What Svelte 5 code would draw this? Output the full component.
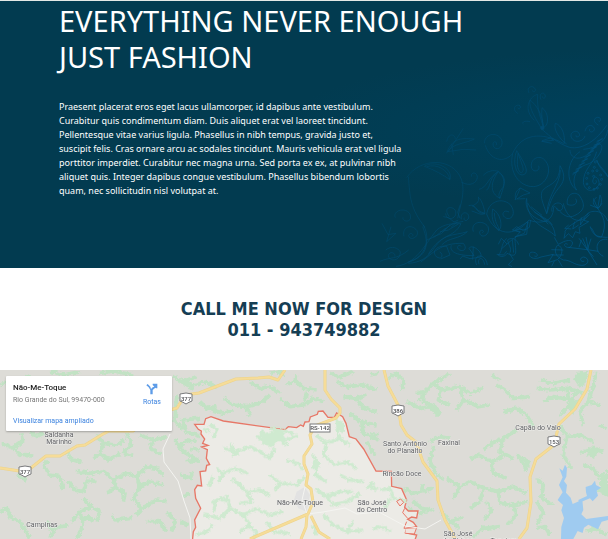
<script>
  const leftGreens = [
    'M0 62L22 48L45 60L90 30M150 18L190 30L240 20M300 25L340 18L400 30M520 30L540 48L580 70M545 50L590 35M530 90L525 170L560 200L600 215M560 200L545 165L600 160M525 225L550 260L600 290M570 250L600 255',
    'M5 235L40 250L70 225L65 205M40 250L60 268L100 270M0 440L20 430L35 460L60 470L90 520M130 300L150 330L180 335L190 375M130 300L145 285M205 350L225 375L250 380L262 345L290 350',
    'M150 518L165 490L205 480M160 500L140 470M290 210L310 235L350 240L375 225M310 235L300 265L325 285L360 265M380 205L395 240L370 262L400 275M420 210L460 225L500 215M460 225L450 250L485 270',
    'M230 320L275 325L310 318L340 345L350 370L320 380M340 345L380 325L410 335L440 305L470 310M350 370L375 385L370 410M410 335L420 365L450 350L490 360M420 365L400 400L425 430L470 405L500 410M425 430L410 450',
    'M250 400L275 425L240 440L215 470M275 425L300 440L290 470M240 440L250 480L230 520M335 450L345 465L395 460M500 440L525 470L515 500M440 470L480 470L500 500M200 260L215 285L245 290',
    'M280 470L265 455L240 465M50 330L80 345M300 265L280 280M470 310L490 330M90 200L110 215L130 205'
  ];
  const middleOuter = [
    'M0 45L40 60L80 50L110 70M60 110L80 130L110 125M80 130L130 145L160 135M130 100L160 120L200 125L240 115L270 90M200 125L210 155M210 50L240 70L270 65L300 85M270 25L300 18L310 35M320 60L345 45L370 70L410 75M345 45L350 30',
    'M300 100L330 125L370 120L400 100L430 110M380 80L375 105M450 25L480 35L520 20M470 50L500 65L550 60L590 75M490 95L530 100L550 130L590 140M530 100L560 90M510 145L540 170L590 180M545 170L550 205L595 225M560 230L585 270',
    'M0 240L25 225L50 230M20 290L50 285M0 330L30 340L40 320M10 395L30 385M0 470L25 480'
  ];
  const middleInner = [
    'M90 175L110 195L100 220M70 190L90 200M130 250L170 260L210 245L240 260L270 280L285 250M150 235L160 255M230 215L255 225L290 215L320 225L350 210M270 190L300 195L340 205M250 195L240 220M290 215L320 240',
    'M110 310L130 325L165 310L205 325M130 325L115 350M155 340L175 355L200 380L240 375L270 390M200 380L215 410L180 415M100 335L85 365M270 330L300 355L350 360L375 335M300 355L285 375M320 285L350 295L370 310',
    'M95 415L120 400L150 410M110 405L100 440M70 450L120 460L150 430L190 450L230 430M150 430L140 390M230 430L270 450L310 440M190 450L210 480L180 500M50 510L80 500L100 480M260 470L280 500L330 505',
    'M410 210L440 235L480 220L470 190M440 235L430 270L465 300M400 270L415 300L405 330L440 350M465 300L500 290L530 310M480 220L510 240M405 370L440 395L460 420L500 410L540 385M440 395L480 380L520 380',
    'M480 330L510 345L550 350M430 450L460 480L500 500L550 495M400 480L410 510M500 500L520 470M580 350L560 370M200 480L230 500L220 520'
  ];
  const rightGreens = [
    'M0 30L25 25M55 40L80 25L100 45L95 75M140 85L165 80L190 55L240 25M165 80L160 110L195 125L210 150M190 55L215 75L270 65L300 85L340 70M215 75L205 105L240 120M270 65L280 105L325 125L360 120M280 105L260 135',
    'M380 60L405 75L430 100L480 95M365 30L390 45M400 140L440 130L470 150L490 185M510 45L550 55L600 45M500 70L540 75L590 70L640 85M520 110L550 95L600 105L630 75M590 70L600 120L570 150',
    'M680 20L670 60L655 110L690 120M655 110L630 140L640 180M570 180L590 215L580 270L605 310M590 215L630 210L670 230M630 265L670 250L700 260M690 180L710 190M440 195L400 220L390 260L430 280M400 220L365 235L340 255',
    'M0 205L25 210M110 110L150 130L180 125L205 150M145 105L160 90M180 230L210 215L240 220M190 245L180 290L200 330L220 340M300 285L325 270L365 290L400 275M365 290L370 325L410 340M440 270L475 290L465 320M230 340L270 365L300 350M270 365L250 400',
    'M300 350L340 370L330 410L300 430M340 370L385 380L430 365L470 385M385 380L390 415L430 420L475 410M350 410L365 435L345 465M430 420L440 450L410 480M100 370L130 385L190 370M125 405L155 430L190 435M115 430L140 445L170 440',
    'M160 355L155 380M215 440L240 470L280 455M240 470L270 490M310 515L340 490L390 485M500 340L520 360L515 400L550 420M500 410L520 440L500 480M640 300L670 310L690 340M650 500L675 490L710 510M500 490L525 485L540 510'
  ];
  const innerCorner = 'M30 375L60 370L70 400L110 410M0 360L20 375M10 490L40 485L60 500M60 400L45 430';
  const ornament = [
    'M680 196C650 240 610 270 568 262C530 248 515 233 486 208C470 180 445 145 450 120C470 135 488 165 490 200',
    'M560 252C535 235 520 205 526 190C545 195 557 225 552 252M610 268C655 265 680 237 683 210M570 270C570 300 610 310 650 255C683 240 660 305 615 315C580 330 575 370 590 390C555 365 560 300 600 275',
    'M615 228C610 245 588 248 579 239C560 220 590 205 597 220C604 230 585 235 588 226M615 214C619 195 636 190 643 205C645 218 625 220 629 207M655 195C640 187 639 174 653 172C668 172 660 190 655 182',
    'M450 185C430 180 425 190 430 192M490 203C510 195 505 155 486 143C483 166 488 185 490 203M463 181C430 150 445 110 473 103C470 150 483 176 490 200M413 160C395 150 405 130 420 137C425 145 415 150 414 143M447 99C437 80 460 73 466 88C467 99 455 95 458 91M483 119C474 100 493 92 496 108C496 119 485 114 488 109',
    'M550 250C485 215 425 220 398 280C385 340 420 380 460 380C500 377 517 330 498 305C482 280 450 295 454 321C460 343 484 330 475 317',
    'M410 272C396 310 409 344 426 345C449 342 440 318 410 272M414 280C430 324 434 330 424 339C408 330 412 300 414 280M314 250C310 225 350 210 365 240C373 267 340 276 339 252C340 240 355 246 348 256M316 256C330 300 370 312 398 281',
    'M297 388C320 385 325 350 356 334C373 350 374 370 369 382C362 390 351 405 360 415C330 400 330 370 354 336M352 337C326 355 331 388 319 390M356 338C387 354 369 382 360 415M356 334C340 330 324 331 310 346',
    'M80 353C120 292 220 290 245 360C257 400 239 440 233 475M85 350C90 410 90 445 135 502M133 319C160 300 220 320 210 359C190 345 164 330 133 319M140 320C170 310 205 330 209 357M245 367C270 380 290 370 292 352C291 333 270 337 275 350',
    'M48 619C110 610 130 560 170 510C194 490 218 491 243 491C220 537 184 517 145 583M85 610C160 605 155 550 200 530C223 521 243 522 262 515C235 540 208 530 185 555M122 606C160 580 180 548 250 550C263 565 252 576 239 570C226 563 235 552 244 559',
    'M130 495C160 550 120 601 85 606C140 588 150 558 128 500M72 529C65 500 95 490 111 512C120 532 87 545 86 526C91 514 106 525 95 530M17 570C35 555 55 564 61 576C61 605 26 606 25 586C30 571 49 580 44 589M0 604C30 590 50 600 86 570',
    'M266 437C290 430 278 450 315 460C310 430 300 415 295 411C300 428 284 433 277 438C292 441 287 460 315 461M275 453C300 461 302 466 315 461M320 463C325 425 365 410 391 434C410 460 395 480 380 475C360 467 370 446 387 456M338 447C332 481 344 495 356 512C370 500 362 460 338 447M343 458C345 490 354 496 357 507',
    'M320 462C345 530 405 532 447 480C470 490 521 495 521 440C530 435 550 483 583 467C611 454 620 436 597 405C577 390 558 410 562 433C576 440 597 433 587 416M516 455C510 430 540 420 548 438C551 455 528 455 530 444',
    'M440 415C430 450 464 484 504 485C520 496 523 511 526 528C500 500 441 496 440 415M443 429C460 467 500 468 517 495M463 456L500 482M482 468L505 493M453 440L486 466M407 419C402 400 411 390 421 384L450 399L430 405L410 417L436 416M421 384L405 420',
    'M540 317C560 350 550 368 535 385C515 410 510 430 500 461C489 430 480 410 486 395C500 370 538 380 540 317M541 330C540 375 505 400 500 461M650 275C640 315 610 325 610 368C615 394 637 400 656 376C662 358 643 338 638 363C640 379 653 369 648 361M650 300C657 320 680 335 683 350C670 330 658 325 650 300',
    'M550 430C560 480 605 500 625 459C640 450 670 450 683 483M554 515C570 490 590 490 626 459M556 515L552 535L565 521L578 533L586 515L600 520L597 502L626 485L611 481L629 463M566 495L554 505L574 507M584 485L578 507L596 495M604 472L601 495L615 472',
    'M650 412C635 420 637 435 653 445C665 437 668 420 660 405L653 445L640 415M630 435L655 445L666 430M653 445C670 470 682 490 665 531C640 535 644 510 630 500C638 517 639 532 683 532',
    'M280 515C270 485 310 478 324 500C333 525 302 539 299 518C300 505 317 512 307 518M208 470C185 440 220 435 227 454C232 478 198 485 197 460M244 478C240 450 270 455 266 474C259 488 249 480 253 473',
    'M380 535C360 555 370 570 355 586C370 595 381 583 381 580C393 585 402 590 407 580C408 555 403 541 406 530L440 523L444 485L406 508L440 508M383 539C400 530 411 540 416 554M383 540C386 560 396 562 390 578M397 540L401 578M365 566L401 535M398 509L421 515L405 534',
    'M452 480L448 502L430 512L410 500L397 510L421 517M444 485L433 520L404 531M355 553L364 535L381 552M388 580L400 598L385 614L396 620M350 583L371 585L380 574',
    'M533 555C520 570 525 590 550 600C570 599 583 615 604 616C627 617 630 594 611 591C594 594 604 609 613 603M533 555C550 560 550 585 532 599L504 608L520 583L483 591C460 602 440 589 452 577C474 573 478 594 463 588M523 532L535 553L551 545C577 535 585 548 570 562C549 565 550 545 563 553M514 569L550 570M515 585L551 585M523 603L515 619M535 600L547 620',
    'M565 562L622 569L651 615M622 569L597 535M622 569L608 535M622 569L633 536M597 562L604 540M640 590L622 569L655 574M618 531L625 568M670 589C638 573 650 533 682 538M182 597L210 585L200 559C170 555 154 575 169 590C189 603 190 580 179 576M214 556C207 577 233 587 282 587L267 565C276 550 310 577 302 591L270 596L248 588L240 597M280 560L278 599',
    'M290 615C275 581 317 577 322 615M297 613C290 591 310 588 314 614M240 475L233 457L241 433M235 480L222 486L206 473L190 470M232 485L213 502M250 484L220 490L190 510M197 505L165 530L140 540M210 495L184 521L160 530M235 492L205 510L180 515',
    'M200 280C216 230 250 235 283 237C260 250 218 250 203 275L250 268L288 270M200 245C208 210 230 230 225 237M250 205L205 275M215 251L220 285M46 473C36 450 80 440 90 463C100 490 65 487 69 472M6 490L24 524L48 520L20 545L33 500'
  ];
  const leafVeins = Array.from({ length: 9 }, (_, i) => ({ x: 577 + i * 9, y: 345 - i * 12 }));
  const dots = [[624,340],[620,355],[621,372],[628,383],[642,388],[652,384],[661,373],[665,358],[662,345],[651,332],[643,322],[646,306],[638,333],[641,349]];
  const roads = [
    'M0 98L26 102L46 86H60L77 76L85 75L103 64L109 61L133 61L156 44L177 38L185 25L199 23L236 9L258 8L269 7L278 10L285 0',
    'M325 0V20L331 29L340 38V43L336 48L315 56L310 65L312 74L304 86V94L308 104L306 115L311 119L313 132L308 144L250 169M307 145L306 157L301 169M311 146L319 162L330 169',
    'M384 0L388 16L398 35L401 55L407 65L416 72L423 92L437 111L438 130L445 150L451 161L455 169',
    'M591 0L587 19L575 39L559 54L554 75L536 89L530 107L531 132L527 158L519 169'
  ];
</script>

<main>
  <section class="hero">
    <svg class="ornament" viewBox="0 0 684 624" aria-hidden="true">
      <defs>
        <linearGradient id="fade" x1="0" y1="0" x2="1" y2="1">
          <stop offset="0" stop-color="#fff" stop-opacity=".1" />
          <stop offset=".5" stop-color="#fff" stop-opacity=".4" />
          <stop offset="1" stop-color="#fff" stop-opacity=".9" />
        </linearGradient>
        <mask id="ornament-mask"><rect width="684" height="624" fill="url(#fade)" /></mask>
      </defs>
      <g mask="url(#ornament-mask)" fill="none" stroke="#006098" stroke-width="2">
        {#each ornament as d}<path {d} />{/each}
        {#each leafVeins as v}<path d="M{v.x} {v.y}l18 -14M{v.x + 1} {v.y - 5}l19 -8" />{/each}
        {#each dots as [x, y]}<circle cx={x} cy={y} r="3" />{/each}
        <circle cx="487" cy="204" r="5" fill="#075a91" />
        <path d="M486 242l25-8 10 7-36 3 30 6" />
      </g>
    </svg>
    <div class="copy">
      <h1>EVERYTHING NEVER ENOUGH<br />JUST FASHION</h1>
      <p>
        Praesent placerat eros eget lacus ullamcorper, id dapibus ante vestibulum.<br />
        Curabitur quis condimentum diam. Duis aliquet erat vel laoreet tincidunt.<br />
        Pellentesque vitae varius ligula. Phasellus in nibh tempus, gravida justo et,<br />
        suscipit felis. Cras ornare arcu ac sodales tincidunt. Mauris vehicula erat vel ligula<br />
        porttitor imperdiet. Curabitur nec magna urna. Sed porta ex ex, at pulvinar nibh<br />
        aliquet quis. Integer dapibus congue vestibulum. Phasellus bibendum lobortis<br />
        quam, nec sollicitudin nisl volutpat at.
      </p>
    </div>
  </section>

  <section class="call">
    <h2>CALL ME NOW FOR DESIGN<br />011 - 943749882</h2>
  </section>

  <section class="map" aria-label="Mapa de Não-Me-Toque">
    <svg class="canvas" viewBox="0 0 608 169" preserveAspectRatio="xMidYMin slice">
      <defs>
        <filter id="rough" filterUnits="userSpaceOnUse" x="0" y="0" width="720" height="540">
          <feTurbulence type="fractalNoise" baseFrequency=".1" numOctaves="3" seed="4" />
          <feDisplacementMap in="SourceGraphic" scale="15" xChannelSelector="R" yChannelSelector="G" />
        </filter>
      </defs>
      <rect width="608" height="169" fill="#dddcd7" />
      <g fill="none" stroke="#c2e2c4" stroke-width="11" stroke-linejoin="round">
        <g transform="translate(0 -5) scale(.3333)" filter="url(#rough)">{#each leftGreens as d}<path {d} />{/each}</g>
        <g transform="translate(180 -5) scale(.3333)" filter="url(#rough)">{#each middleOuter as d}<path {d} />{/each}</g>
        <g transform="translate(370 -5) scale(.3333)" filter="url(#rough)">
          {#each rightGreens as d}<path {d} />{/each}
          <path fill="#c2e2c4" stroke="none" d="M620 20L655 18L648 55L630 70L612 43ZM595 100L625 110L610 150L594 128ZM690 330L714 315V395L680 380L690 365ZM665 245L688 260L672 282L650 270ZM440 275L482 302L465 315Z" />
        </g>
      </g>
      <g transform="translate(180 -5) scale(.3333)">
        <path fill="#ecebe6" d="M36 540L40 500L47 487L44 465L62 430L47 400L44 374L52 361L65 363L60 320L77 318L80 301L89 299L79 280L82 254L65 246L84 241L68 235L74 222L63 207L64 198L55 193L44 178H72L77 161L93 155L130 168L315 194L325 185L350 188L362 180L370 184L375 171L387 170L391 156L412 148L415 139L429 138L444 157L463 157L470 144L488 155L498 175L508 215L528 222L551 252L588 318L634 319L635 364L665 371L680 405L674 427L685 438H714L710 459L695 456L683 463L700 472L710 485L680 490L676 503L710 510L700 540Z" stroke="#e77767" stroke-width="4" />
        <g fill="none" stroke="#cfead0" stroke-width="10" stroke-linejoin="round" filter="url(#rough)">
          {#each middleInner as d}<path {d} />{/each}
          <path transform="translate(570 0)" d={innerCorner} />
          <path fill="#cfead0" stroke="none" d="M250 205L302 192L319 216L293 229L275 249L246 237ZM466 160L492 172V201L470 195ZM155 260L171 252L178 270L159 275ZM400 285L416 295L411 318L396 309Z" />
        </g>
        <path fill="#e2e2e2" d="M350 380L374 366L390 390L380 440L355 430L342 405Z" />
        <path fill="#f0e4df" stroke="#e77767" stroke-width="3" d="M650 409L662 402L671 412L660 423ZM674 430L668 443L683 460M680 470L672 490L710 488L703 507L676 505" />
      </g>

      <g fill="none" stroke="#f4f4f1" stroke-width="1">
        <path d="M170 64L163 79L164 92L178 111L184 131L190 148L191 169" />
        <path d="M305 117L302 130L307 144L323 142L345 138L357 144L379 142L405 156L425 159L441 150" />
      </g>
      <g fill="none" stroke-linejoin="round">
        {#each roads as d}
          <path {d} stroke="#ecd38a" stroke-width="3" />
          <path {d} stroke="#f6dc98" stroke-width="2" />
        {/each}
      </g>
      <g transform="translate(370 -5) scale(.3333)" fill="#9fcbf0">
        <path d="M568 310L578 317L585 299L591 309L589 335L582 348L591 360L588 383L602 398L608 417L637 404L640 435L634 448L649 462L714 453V465L695 470L684 493L655 479L642 488L638 504L623 498L610 522H573L574 486L582 459L574 436L579 420L563 405L578 382L567 360L578 337Z" />
        <path d="M647 366L665 360L675 347L678 360L693 368L680 377L684 392L668 409L660 400L631 412L633 430L625 405L651 393L648 381Z" />
      </g>

      <g class="shields">
        <g transform="translate(186 28)"><path d="M-6 -4Q0 -6 6 -4V3Q3 4 0 6Q-3 4 -6 3Z" /><text y="3">377</text></g>
        <g transform="translate(25 101)"><path d="M-6 -4Q0 -6 6 -4V3Q3 4 0 6Q-3 4 -6 3Z" /><text y="3">377</text></g>
        <g transform="translate(398 40)"><path d="M-6 -4Q0 -6 6 -4V3Q3 4 0 6Q-3 4 -6 3Z" /><text y="3">386</text></g>
        <g transform="translate(554 71)"><path d="M-6 -4Q0 -6 6 -4V3Q3 4 0 6Q-3 4 -6 3Z" /><text y="3">153</text></g>
        <g transform="translate(320 58)"><rect x="-10" y="-4" width="20" height="8" /><text y="2">RS-142</text></g>
      </g>
      <g class="places">
        <text x="59" y="67">Saldanha</text><text x="59" y="74">Marinho</text>
        <text x="42" y="157">Campinas</text>
        <text x="300" y="135">Não-Me-Toque</text>
        <text x="372" y="135">São José</text><text x="372" y="142">do Centro</text>
        <text x="405" y="76">Santo Antônio</text><text x="405" y="83">do Planalto</text>
        <text x="449" y="75">Faxinal</text>
        <text x="402" y="106">Rincão Doce</text>
        <text x="538" y="60">Capão do Valo</text>
        <text x="458" y="166">São José</text><text x="458" y="173">do Ciríaco</text>
        <text x="504" y="173">Tapejara</text>
      </g>
    </svg>

    <div class="card">
      <div class="place">
        <strong>Não-Me-Toque</strong>
        <span>Rio Grande do Sul, 99470-000</span>
        <a href="#mapa">Visualizar mapa ampliado</a>
      </div>
      <a class="routes" href="#rotas">
        <svg viewBox="0 0 36 36" aria-hidden="true">
          <path fill="#5d9ce8" d="M1 7L5 3L13 11L15 18L20 13L25 11L20 6V2H34V16L30 16L28 14L20 21V34H13V21L8 13Z" />
        </svg>
        <span>Rotas</span>
      </a>
    </div>
  </section>
</main>

<style>
  :global(body) {
    margin: 0;
    background: #fff;
  }
  main {
    height: 100vh;
    overflow: hidden;
    display: flex;
    flex-direction: column;
    font-family: Tahoma, "Noto Sans", sans-serif;
  }
  .hero {
    position: relative;
    flex: none;
    box-sizing: border-box;
    padding: 2px 59px 70px;
    border-top: 1px solid #e3e8e6;
    color: #fff;
    background: radial-gradient(ellipse at 112% 48%, #00405f 0, #003f58 18%, #023b50 42%);
  }
  .ornament {
    position: absolute;
    right: 0;
    bottom: 0;
    width: 228px;
    height: 208px;
  }
  .copy {
    position: relative;
  }
  h1 {
    margin: 0;
    font-size: 29px;
    line-height: 36px;
    font-weight: 400;
    white-space: nowrap;
  }
  p {
    margin: 25px 0 0;
    font-size: 9px;
    line-height: 14px;
    white-space: nowrap;
  }
  .call {
    flex: none;
    padding: 30px 0;
    text-align: center;
  }
  h2 {
    margin: 0;
    color: #153e54;
    font-family: Tahoma, "DejaVu Sans Condensed", "DejaVu Sans", sans-serif;
    font-size: 18px;
    line-height: 21px;
    font-weight: 700;
  }
  .map {
    position: relative;
    flex: 1;
    min-height: 0;
    font-family: Roboto, sans-serif;
  }
  .canvas {
    display: block;
    width: 100%;
    height: 100%;
  }
  .places text {
    font-size: 7px;
    fill: #606164;
    stroke: #eeeeec;
    stroke-width: 1px;
    paint-order: stroke;
    text-anchor: middle;
  }
  .shields path,
  .shields rect {
    fill: #fff;
    stroke: #77787a;
    stroke-width: 1;
  }
  .shields text {
    font-size: 6px;
    font-weight: 500;
    fill: #505154;
    text-anchor: middle;
  }
  .card {
    position: absolute;
    top: 6px;
    left: 6px;
    box-sizing: border-box;
    width: 166px;
    height: 55px;
    padding: 6px 11px 6px 7px;
    display: flex;
    justify-content: space-between;
    background: #fff;
    border-radius: 1px;
    box-shadow: 0 1px 2px #0004;
    font-size: 7px;
    line-height: 12px;
  }
  .place {
    display: flex;
    flex-direction: column;
  }
  strong {
    font-size: 8px;
    font-weight: 500;
    color: #222;
  }
  .place span {
    color: #777;
  }
  a {
    color: #3c83df;
    text-decoration: none;
  }
  .place a {
    margin-top: 9px;
  }
  .routes {
    display: flex;
    flex-direction: column;
    align-items: center;
    padding-top: 1px;
    gap: 1px;
  }
  .routes svg {
    width: 12px;
    height: 12px;
  }
</style>
